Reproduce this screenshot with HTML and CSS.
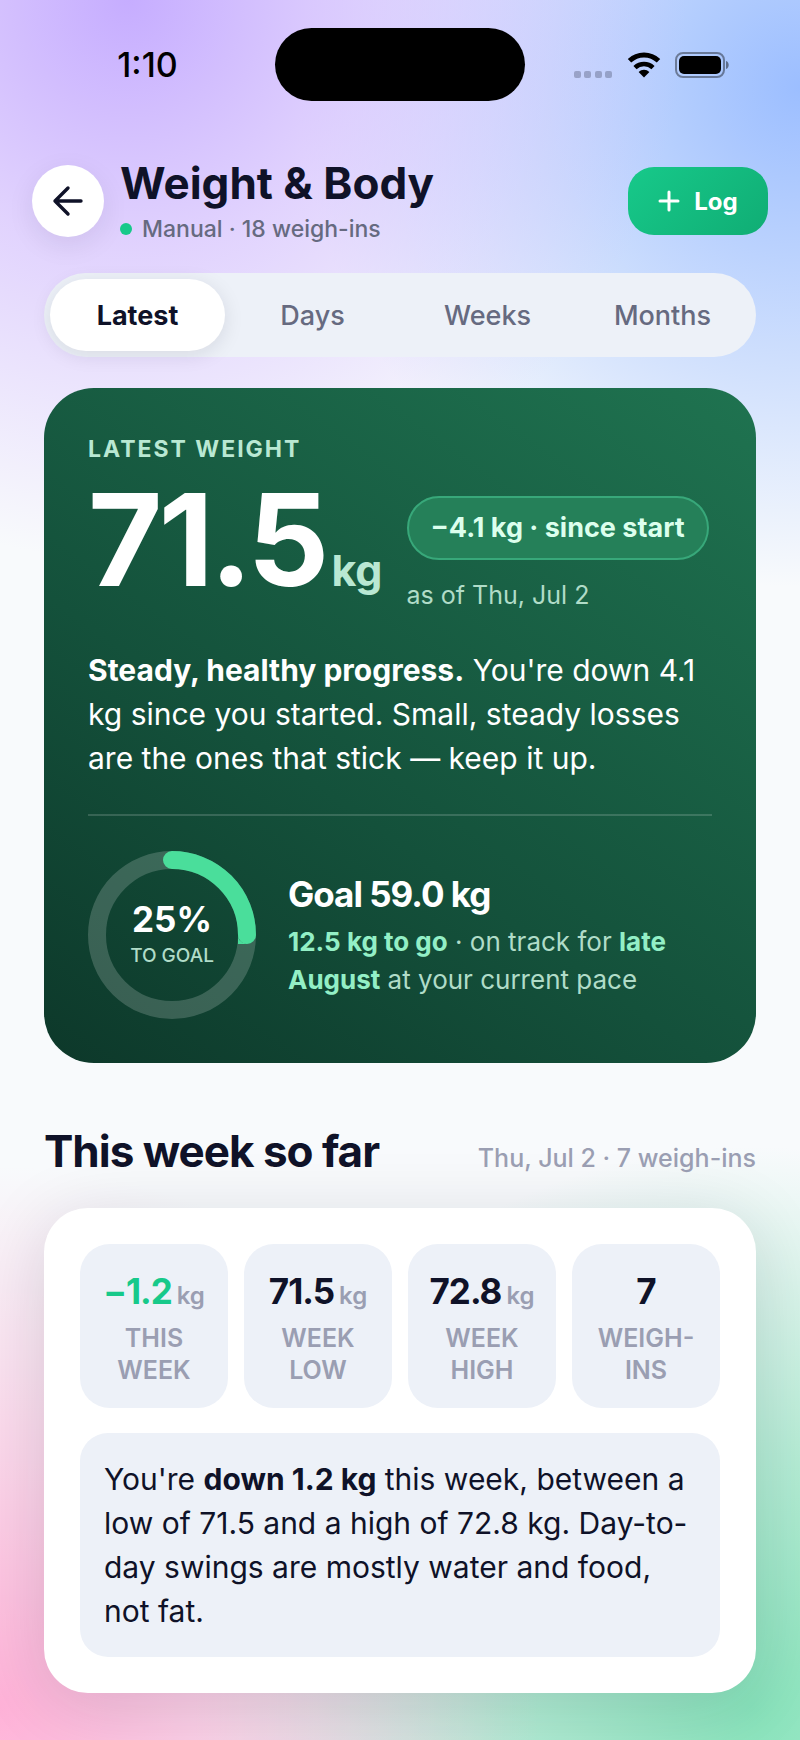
FILE: index.html
```html
<!DOCTYPE html>
<html lang="en">
<head>
  <meta charset="UTF-8">
  <meta name="viewport" content="width=device-width, initial-scale=1.0">
  <title>Weight &amp; Body</title>
  <link rel="stylesheet" href="styles.css">
</head>
<body>
  <div class="statusbar">
    <div class="clock">1:10</div>
    <div class="island"></div>
    <div class="indicators">
      <svg class="signal" width="40" height="28" viewBox="0 0 40 28" aria-hidden="true">
        <rect x="1" y="20" width="7" height="7" rx="2"/>
        <rect x="11" y="20" width="7" height="7" rx="2"/>
        <rect x="22" y="20" width="7" height="7" rx="2"/>
        <rect x="32" y="20" width="7" height="7" rx="2"/>
      </svg>
      <svg width="34" height="26" viewBox="0 0 34 26" aria-hidden="true">
        <path d="M2.5 8.8a21 21 0 0 1 29 0" fill="none" stroke="#000" stroke-width="5"/>
        <path d="M8 15.6a13.2 13.2 0 0 1 18 0" fill="none" stroke="#000" stroke-width="4.6"/>
        <path d="M17 25.4l-5.4-5.5a8 8 0 0 1 10.8 0z"/>
      </svg>
      <svg width="56" height="26" viewBox="0 0 56 26" aria-hidden="true">
        <rect x="1" y="1" width="48" height="24" rx="7" fill="none" stroke="#000" stroke-opacity=".4" stroke-width="2"/>
        <rect x="4" y="4" width="42" height="18" rx="5"/>
        <path d="M51 9c3.6 1 3.6 7 0 8z" fill-opacity=".45"/>
      </svg>
    </div>
  </div>

  <header class="header">
    <button class="back" type="button" aria-label="Back">
      <svg width="32" height="32" viewBox="0 0 32 32" fill="none" stroke="#0f1228" stroke-width="3.4" stroke-linecap="round" stroke-linejoin="round" aria-hidden="true">
        <path d="M29 16H3M16 3L3 16l13 13"/>
      </svg>
    </button>
    <div class="titles">
      <h1>Weight &amp; Body</h1>
      <p class="source"><span class="dot"></span>Manual · 18 weigh-ins</p>
    </div>
    <button class="log" type="button">
      <svg width="22" height="22" viewBox="0 0 22 22" fill="none" stroke="#fff" stroke-width="3" stroke-linecap="round" aria-hidden="true">
        <path d="M11 2v18M2 11h18"/>
      </svg>
      Log
    </button>
  </header>

  <main>
    <nav class="tabs">
      <button class="tab active" type="button">Latest</button>
      <button class="tab" type="button">Days</button>
      <button class="tab" type="button">Weeks</button>
      <button class="tab" type="button">Months</button>
    </nav>

    <section class="hero">
      <h2 class="eyebrow">LATEST WEIGHT</h2>
      <div class="reading">
        <div class="value">71.5<span class="unit">kg</span></div>
        <div class="change">
          <span class="pill">−4.1 kg · since start</span>
          <span class="asof">as of Thu, Jul 2</span>
        </div>
      </div>
      <p class="message"><strong>Steady, healthy progress.</strong> You're down 4.1 kg since you started. Small, steady losses are the ones that stick — keep it up.</p>
      <div class="goal">
        <div class="ring">
          <svg viewBox="0 0 168 168" fill="none" stroke-width="18" aria-hidden="true">
            <circle cx="84" cy="84" r="75" stroke="#fff" stroke-opacity=".18"/>
            <circle cx="84" cy="84" r="75" stroke="#4ade9b" stroke-linecap="round" pathLength="100" stroke-dasharray="25 100" transform="rotate(-90 84 84)"/>
          </svg>
          <div class="ring-label">
            <span class="percent">25%</span>
            <span class="caption">TO GOAL</span>
          </div>
        </div>
        <div class="goal-text">
          <h3>Goal 59.0 kg</h3>
          <p><strong>12.5 kg to go</strong> · on track for <strong>late August</strong> at your current pace</p>
        </div>
      </div>
    </section>

    <div class="section-head">
      <h2>This week so far</h2>
      <span>Thu, Jul 2 · 7 weigh-ins</span>
    </div>

    <section class="card">
      <div class="stats">
        <div class="stat">
          <div class="number down">−1.2<small>kg</small></div>
          <div class="label">THIS WEEK</div>
        </div>
        <div class="stat">
          <div class="number">71.5<small>kg</small></div>
          <div class="label">WEEK LOW</div>
        </div>
        <div class="stat">
          <div class="number">72.8<small>kg</small></div>
          <div class="label">WEEK HIGH</div>
        </div>
        <div class="stat">
          <div class="number">7</div>
          <div class="label">WEIGH-INS</div>
        </div>
      </div>
      <p class="note">You're <strong>down 1.2 kg</strong> this week, between a low of 71.5 and a high of 72.8 kg. Day-to-day swings are mostly water and food, not fat.</p>
    </section>
  </main>
</body>
</html>
```
FILE: styles.css
```css
* {
  box-sizing: border-box;
}
body {
  margin: 0;
  padding-bottom: 48px;
  font-family: Inter, "Liberation Sans", sans-serif;
  color: #0f1228;
  background:
    radial-gradient(circle 560px at 16% 0, #c6adff, rgba(210, 185, 255, 0.6) 45%, rgba(220, 200, 255, 0)),
    radial-gradient(circle 500px at 100% 5%, #9cbeff, rgba(156, 190, 255, 0.6) 40%, rgba(156, 190, 255, 0)),
    radial-gradient(circle 540px at 0 98%, #ffb2d8, rgba(255, 178, 216, 0.5) 45%, rgba(255, 178, 216, 0)),
    radial-gradient(circle 560px at 94% 98%, #88e3bb, rgba(136, 227, 187, 0.6) 45%, rgba(136, 227, 187, 0)),
    #f8fafc;
}
h1, h2, h3, p {
  margin: 0;
}
button {
  border: 0;
  font: inherit;
  color: inherit;
}

/* status bar */
.statusbar {
  display: grid;
  grid-template-columns: 1fr 250px 1fr;
  align-items: center;
  padding-top: 28px;
}
.clock {
  padding-left: 20px;
  text-align: center;
  font-size: 34px;
  font-weight: 500;
  color: #000;
}
.island {
  height: 73px;
  border-radius: 37px;
  background: #000;
}
.indicators {
  display: flex;
  align-items: center;
  gap: 14px;
  padding-left: 48px;
}
.signal {
  fill: #0f1228;
  fill-opacity: 0.25;
}

/* header */
.header {
  display: flex;
  align-items: center;
  gap: 16px;
  padding: 56px 32px 0;
}
.back {
  display: grid;
  place-items: center;
  width: 72px;
  height: 72px;
  border-radius: 50%;
  background: #fff;
  box-shadow: 0 8px 28px rgba(15, 18, 40, 0.08);
}
.titles {
  flex: 1;
}
h1 {
  font-size: 44px;
  line-height: 52px;
  font-weight: 700;
}
.source {
  display: flex;
  align-items: center;
  gap: 10px;
  margin-top: 4px;
  font-size: 23px;
  line-height: 32px;
  font-weight: 500;
  color: #666a80;
}
.dot {
  width: 12px;
  height: 12px;
  border-radius: 50%;
  background: #17c98a;
}
.log {
  display: flex;
  align-items: center;
  justify-content: center;
  gap: 14px;
  width: 140px;
  height: 68px;
  border-radius: 26px;
  background: linear-gradient(135deg, #17c98a, #10ad74);
  color: #fff;
  font-size: 24px;
  font-weight: 700;
}

main {
  padding: 0 44px;
}

/* tabs */
.tabs {
  display: grid;
  grid-template-columns: repeat(4, 1fr);
  margin-top: 28px;
  padding: 6px;
  border-radius: 42px;
  background: #edf1f8;
}
.tab {
  height: 72px;
  border-radius: 36px;
  background: none;
  font-size: 27px;
  font-weight: 500;
  color: #666a80;
}
.tab.active {
  background: #fff;
  color: #0f1228;
  font-weight: 700;
  box-shadow: 0 4px 20px rgba(15, 18, 40, 0.1);
}

/* latest weight */
.hero {
  margin-top: 31px;
  padding: 44px;
  border-radius: 50px;
  background: linear-gradient(215deg, #1f7350, #14513b 60%, #0d382a);
  color: #fff;
}
.eyebrow {
  font-size: 23px;
  line-height: 34px;
  font-weight: 700;
  letter-spacing: 2px;
  color: #b9e8d3;
}
.reading {
  display: flex;
  gap: 24px;
}
.value {
  font-size: 128px;
  line-height: 148px;
  font-weight: 700;
  letter-spacing: -4px;
}
.unit {
  margin-left: 6px;
  font-size: 43px;
  line-height: 1;
  letter-spacing: 0;
  color: #b9e8d3;
}
.change {
  display: flex;
  flex-direction: column;
  align-items: flex-start;
  gap: 18px;
  padding-top: 30px;
}
.pill {
  padding: 14px 22px;
  border: 2px solid #38a87a;
  border-radius: 32px;
  background: #258059;
  color: #dcffed;
  font-size: 27px;
  line-height: 32px;
  font-weight: 700;
  white-space: nowrap;
}
.asof {
  font-size: 25px;
  line-height: 34px;
  color: #b0dcc8;
}
.message {
  margin-top: 34px;
  font-size: 30px;
  line-height: 44px;
}
.goal {
  display: flex;
  align-items: center;
  gap: 32px;
  margin-top: 34px;
  padding-top: 35px;
  border-top: 2px solid rgba(255, 255, 255, 0.16);
}
.ring {
  display: grid;
  flex: none;
  width: 168px;
}
.ring svg,
.ring-label {
  grid-area: 1 / 1;
}
.ring-label {
  display: flex;
  flex-direction: column;
  align-items: center;
  justify-content: center;
}
.percent {
  font-size: 35px;
  line-height: 42px;
  font-weight: 700;
}
.caption {
  font-size: 19px;
  line-height: 32px;
  font-weight: 500;
  color: #b0dcc8;
}
.goal-text h3 {
  font-size: 35px;
  line-height: 46px;
  font-weight: 700;
  letter-spacing: -1px;
}
.goal-text p {
  margin-top: 6px;
  font-size: 26px;
  line-height: 38px;
  color: #b0dcc8;
}
.goal-text strong {
  color: #93efc6;
}

/* this week */
.section-head {
  display: flex;
  align-items: baseline;
  justify-content: space-between;
  margin-top: 60px;
}
.section-head h2 {
  font-size: 44px;
  line-height: 56px;
  font-weight: 700;
  letter-spacing: -1px;
}
.section-head span {
  font-size: 25px;
  font-weight: 500;
  color: #9a9eb2;
}
.card {
  margin-top: 29px;
  padding: 36px;
  border-radius: 44px;
  background: #fff;
  box-shadow: 0 12px 72px rgba(15, 18, 40, 0.14);
}
.stats {
  display: grid;
  grid-template-columns: repeat(4, 1fr);
  gap: 16px;
}
.stat {
  padding: 24px 12px 22px;
  border-radius: 30px;
  background: #edf1f8;
  text-align: center;
}
.number {
  font-size: 35px;
  line-height: 46px;
  font-weight: 700;
  letter-spacing: -1px;
  white-space: nowrap;
}
.number small {
  margin-left: 5px;
  font-size: 24px;
  line-height: 1;
  font-weight: 600;
  letter-spacing: 0;
  color: #9a9eb2;
}
.number.down {
  color: #17c98a;
}
.label {
  margin-top: 8px;
  font-size: 25px;
  line-height: 32px;
  font-weight: 600;
  color: #9a9eb2;
}
.note {
  margin-top: 25px;
  padding: 24px;
  border-radius: 28px;
  background: #edf1f8;
  font-size: 30px;
  line-height: 44px;
}
```
